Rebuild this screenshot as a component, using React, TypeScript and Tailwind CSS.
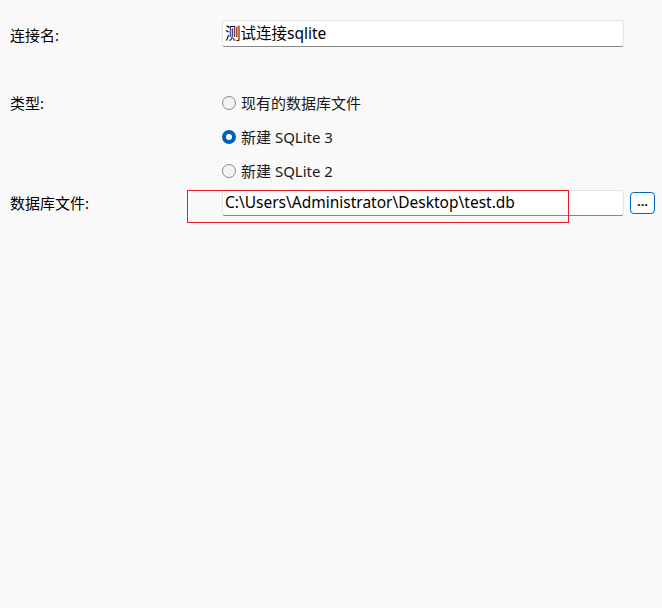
const font = "font-['Noto_Sans','Noto_Sans_CJK_SC',sans-serif]";

function Radio({ label, checked }: { label: string; checked?: boolean }) {
  return (
    <div className="flex h-[34px] items-center gap-[5px]">
      {checked ? (
        <span className="flex h-[14px] w-[14px] items-center justify-center rounded-full bg-[#005fb8]">
          <span className="h-[6px] w-[6px] rounded-full bg-white" />
        </span>
      ) : (
        <span className="h-[14px] w-[14px] rounded-full border border-[#8a8a8a] bg-[#f3f3f3]" />
      )}
      <span className="text-[15px] leading-none text-[#1a1a1a]">{label}</span>
    </div>
  );
}

export default function App() {
  return (
    <div className={`min-h-[608px] w-[662px] bg-[#f9f9f9] pl-[10px] pt-[20px] ${font}`}>
      {/* connection name */}
      <div className="flex h-[27px] items-center">
        <label className="w-[212px] pt-[3px] text-[15px] text-black">连接名:</label>
        <div className="flex h-[27px] w-[402px] items-center rounded-[3px] border border-b-[#868686] border-[#e5e5e5] bg-white px-[2px] text-[15.5px] text-black">
          测试连接sqlite
        </div>
      </div>

      {/* type */}
      <div className="mt-[39px] flex">
        <label className="flex h-[34px] w-[212px] items-center text-[15px] text-black">类型:</label>
        <div className="flex flex-col">
          <Radio label="现有的数据库文件" />
          <Radio label="新建 SQLite 3" checked />
          <Radio label="新建 SQLite 2" />
        </div>
      </div>

      {/* db file */}
      <div className="mt-[2px] flex h-[26px] items-center">
        <label className="w-[212px] pt-[1px] text-[15px] text-black">数据库文件:</label>
        <div className="relative">
          <div className="flex h-[26px] w-[402px] items-center rounded-[3px] border border-b-[#868686] border-[#e5e5e5] bg-white px-[2px] text-[15.5px] text-black">
            C:\Users\Administrator\Desktop\test.db
          </div>
          <div className="absolute left-[-35px] top-0 h-[33px] w-[382px] border border-[#e81c24]" />
        </div>
        <button className="ml-[6px] flex h-[22px] w-[25px] items-center justify-center rounded-[4px] border border-[#0067c0] bg-white pb-[4px] text-[13px] font-bold leading-none text-[#1a1a1a]">
          ...
        </button>
      </div>
    </div>
  );
}
